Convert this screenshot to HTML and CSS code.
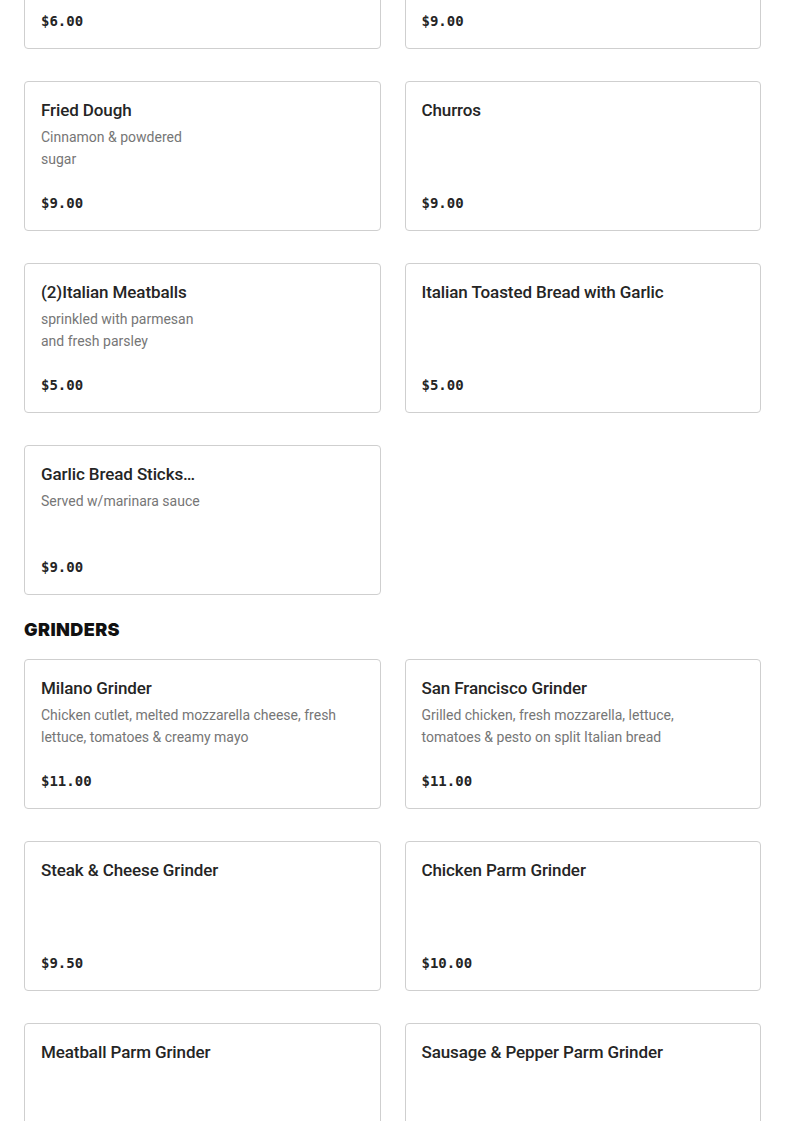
FILE: index.html
```html
<!DOCTYPE html>
<html lang="en">
<head>
<meta charset="utf-8">
<title>Menu</title>
<link rel="stylesheet" href="styles.css">
</head>
<body>
<main class="menu">
  <section class="section section-top">
    <div class="grid">
      <div class="card"><div class="card-title"></div><div class="price">$6.00</div></div>
      <div class="card"><div class="card-title"></div><div class="price">$9.00</div></div>
      <div class="card">
        <div class="card-title">Fried Dough</div>
        <div class="desc">Cinnamon &amp; powdered<br>sugar</div>
        <div class="price">$9.00</div>
      </div>
      <div class="card">
        <div class="card-title">Churros</div>
        <div class="price">$9.00</div>
      </div>
      <div class="card">
        <div class="card-title">(2)Italian Meatballs</div>
        <div class="desc">sprinkled with parmesan<br>and fresh parsley</div>
        <div class="price">$5.00</div>
      </div>
      <div class="card">
        <div class="card-title">Italian Toasted Bread with Garlic</div>
        <div class="price">$5.00</div>
      </div>
      <div class="card">
        <div class="card-title">Garlic Bread Sticks…</div>
        <div class="desc">Served w/marinara sauce</div>
        <div class="price">$9.00</div>
      </div>
    </div>
  </section>
  <section class="section">
    <h2 class="section-title">GRINDERS</h2>
    <div class="grid">
      <div class="card">
        <div class="card-title">Milano Grinder</div>
        <div class="desc">Chicken cutlet, melted mozzarella cheese, fresh lettuce, tomatoes &amp; creamy mayo</div>
        <div class="price">$11.00</div>
      </div>
      <div class="card">
        <div class="card-title">San Francisco Grinder</div>
        <div class="desc">Grilled chicken, fresh mozzarella, lettuce, tomatoes &amp; pesto on split Italian bread</div>
        <div class="price">$11.00</div>
      </div>
      <div class="card">
        <div class="card-title">Steak &amp; Cheese Grinder</div>
        <div class="price">$9.50</div>
      </div>
      <div class="card">
        <div class="card-title">Chicken Parm Grinder</div>
        <div class="price">$10.00</div>
      </div>
      <div class="card">
        <div class="card-title">Meatball Parm Grinder</div>
        <div class="price">$10.00</div>
      </div>
      <div class="card">
        <div class="card-title">Sausage &amp; Pepper Parm Grinder</div>
        <div class="price">$10.00</div>
      </div>
    </div>
  </section>
</main>
</body>
</html>
```

FILE: styles.css
```css
html, body {
  margin: 0;
  padding: 0;
  background: #ffffff;
}
body {
  font-family: Roboto, "Liberation Sans", sans-serif;
  color: #222222;
  overflow: hidden;
}
.menu {
  padding: 0 24px;
}
.section-top {
  margin-top: -101px;
}
.grid {
  display: grid;
  grid-template-columns: 1fr 1fr;
  column-gap: 24px;
  row-gap: 32px;
}
.card {
  box-sizing: border-box;
  height: 150px;
  border: 1px solid #cfcfcf;
  border-radius: 4px;
  padding: 16px 16px 17px;
  display: flex;
  flex-direction: column;
  background: #fff;
}
.card-title {
  font-size: 17px;
  line-height: 24px;
  font-weight: 500;
  letter-spacing: -0.1px;
  color: #252525;
  min-height: 24px;
}
.desc {
  margin-top: 4px;
  padding-right: 16px;
  font-size: 14px;
  line-height: 22px;
  color: #767676;
}
.price {
  margin-top: auto;
  font-family: "DejaVu Sans Mono", "Liberation Mono", monospace;
  font-weight: bold;
  font-size: 14px;
  line-height: 20px;
  color: #252525;
}
.section-title {
  margin: 24px 0 18px;
  font-family: Inter, "Liberation Sans", sans-serif;
  font-weight: 900;
  font-size: 18px;
  line-height: 22px;
  letter-spacing: 0.4px;
  color: #111;
}
```
